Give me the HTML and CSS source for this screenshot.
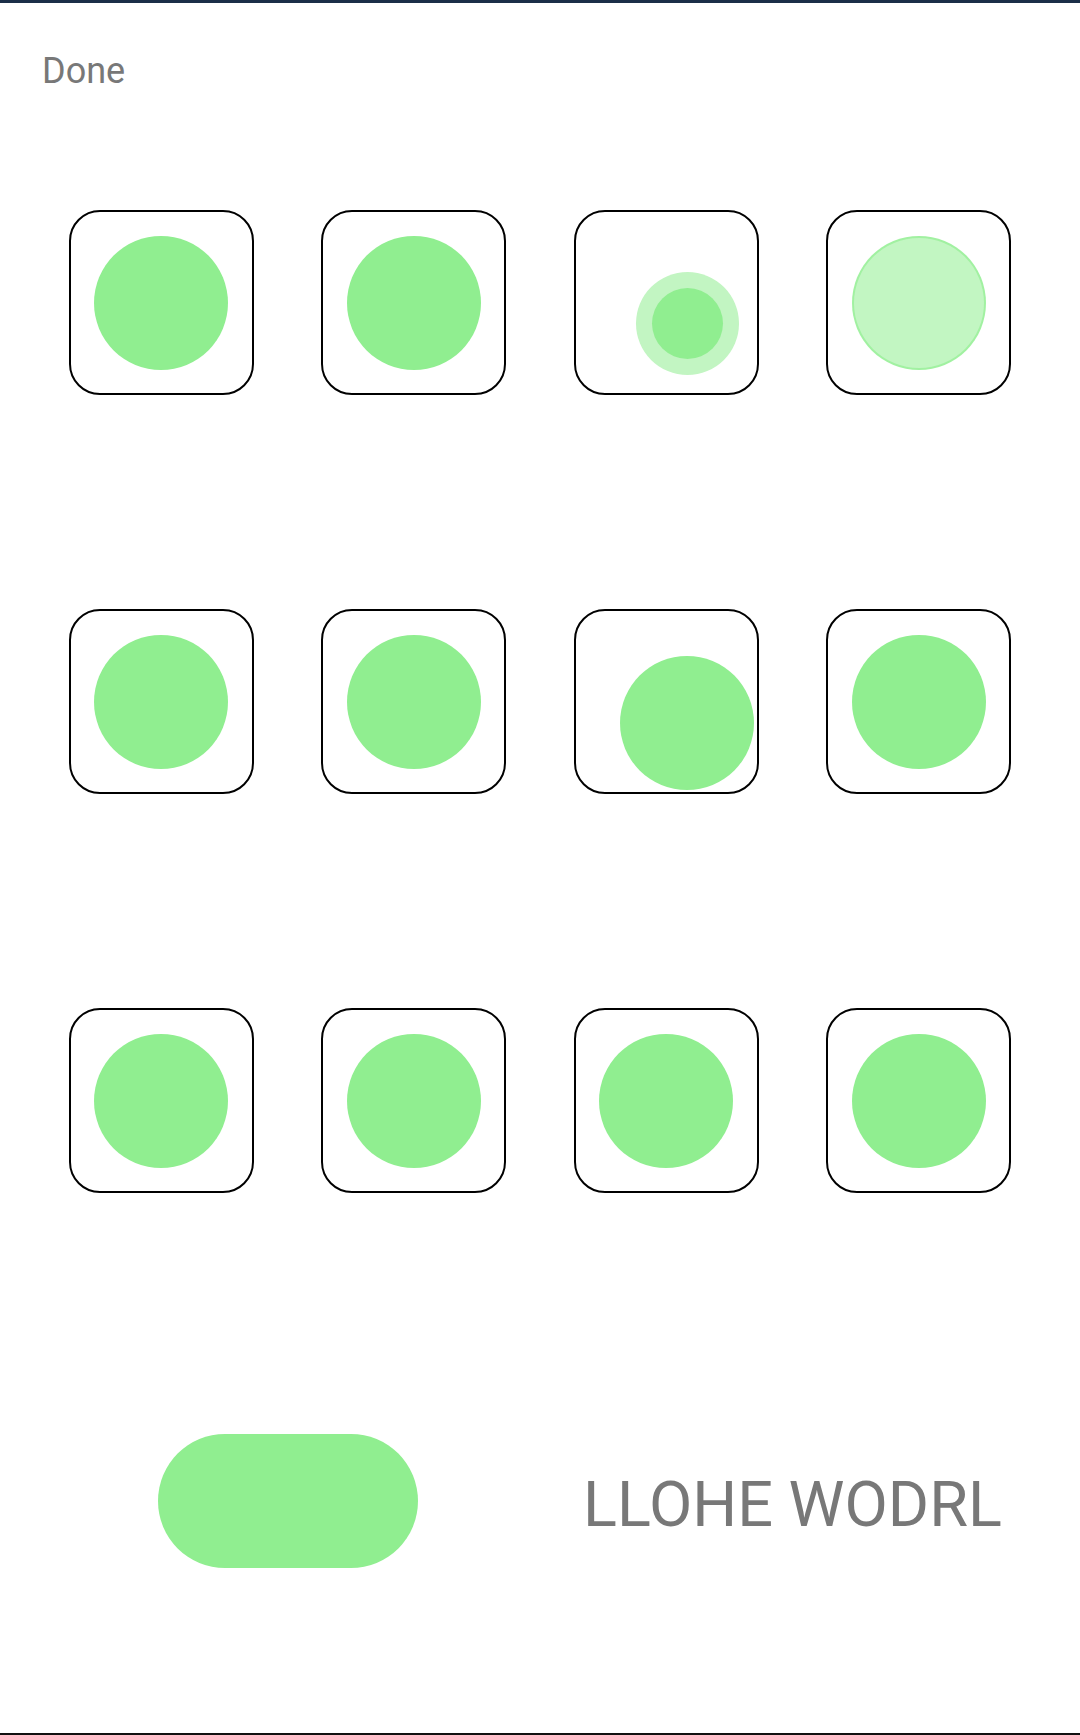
FILE: index.html
```html
<!DOCTYPE html>
<html>
<head>
<meta charset="utf-8">
<link rel="stylesheet" href="styles.css">
</head>
<body>
<div class="page">
  <div class="header">Done</div>
  <div class="grid">
    <div class="cell"><div class="tile"><div class="dot"></div></div></div>
    <div class="cell"><div class="tile"><div class="dot"></div></div></div>
    <div class="cell"><div class="tile"><div class="ripple shifted"><div class="ripple-core"></div></div></div></div>
    <div class="cell"><div class="tile"><div class="dot faded"></div></div></div>

    <div class="cell"><div class="tile"><div class="dot"></div></div></div>
    <div class="cell"><div class="tile"><div class="dot"></div></div></div>
    <div class="cell"><div class="tile"><div class="dot shifted"></div></div></div>
    <div class="cell"><div class="tile"><div class="dot"></div></div></div>

    <div class="cell"><div class="tile"><div class="dot"></div></div></div>
    <div class="cell"><div class="tile"><div class="dot"></div></div></div>
    <div class="cell"><div class="tile"><div class="dot"></div></div></div>
    <div class="cell"><div class="tile"><div class="dot"></div></div></div>
  </div>
  <div class="footer">
    <div class="half"><div class="pill"></div></div>
    <div class="half"><span class="label">LLOHE WODRL</span></div>
  </div>
</div>
</body>
</html>
```

FILE: styles.css
```css
html, body {
  margin: 0;
  padding: 0;
  background: #ffffff;
}

.page {
  width: 1080px;
  height: 1735px;
  box-sizing: border-box;
  border-top: 3px solid #1b2f48;
  border-bottom: 2px solid #111111;
  font-family: Roboto, "Noto Sans", sans-serif;
  display: flex;
  flex-direction: column;
}

.header {
  margin-top: 47px;
  padding-left: 42px;
  font-size: 36px;
  line-height: 42px;
  color: #787878;
}

.grid {
  margin-top: 118px;
  padding: 0 35px;
  display: grid;
  grid-template-columns: repeat(4, 1fr);
  row-gap: 214px;
}

.cell {
  display: flex;
  justify-content: center;
}

.tile {
  width: 185px;
  height: 185px;
  box-sizing: border-box;
  border: 2px solid #000000;
  border-radius: 31px;
  display: flex;
  align-items: center;
  justify-content: center;
}

.dot {
  width: 134px;
  height: 134px;
  border-radius: 50%;
  background: #90ee90;
  flex: none;
}

.dot.faded {
  box-sizing: border-box;
  background: rgba(144, 238, 144, 0.55);
  border: 2px solid rgba(144, 238, 144, 0.65);
}

.shifted {
  transform: translate(21px, 21px);
}

.ripple {
  width: 103px;
  height: 103px;
  border-radius: 50%;
  background: #c2f5c2;
  display: flex;
  align-items: center;
  justify-content: center;
  flex: none;
}

.ripple-core {
  width: 71px;
  height: 71px;
  border-radius: 50%;
  background: #90ee90;
}

.footer {
  margin-top: 241px;
  padding: 0 35px;
  display: flex;
  height: 134px;
}

.half {
  flex: 1;
  display: flex;
  align-items: center;
  justify-content: center;
}

.pill {
  width: 260px;
  height: 134px;
  border-radius: 67px;
  background: #90ee90;
}

.label {
  font-size: 63px;
  color: #787878;
  padding-top: 6px;
}
```
